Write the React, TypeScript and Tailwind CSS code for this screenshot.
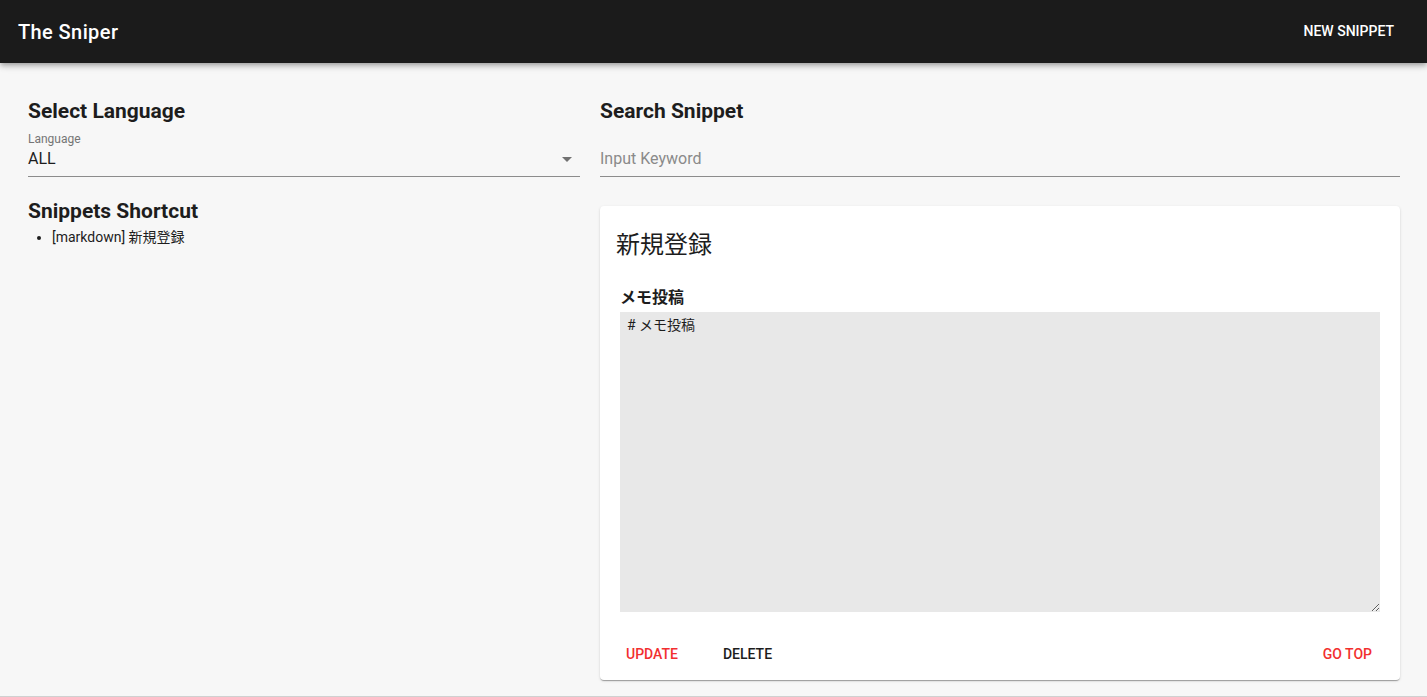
import React, { ReactElement } from 'react';

const FONT = "font-['Roboto','Noto_Sans_CJK_JP',sans-serif]";

const Header = (): ReactElement => {
  return (
    <header className="h-[63px] bg-[#1b1b1b] flex items-center justify-between pl-[18px] pr-[25px] shadow-[0_2px_4px_-1px_rgba(0,0,0,0.2),0_4px_5px_0_rgba(0,0,0,0.14),0_1px_10px_0_rgba(0,0,0,0.12)] relative z-10">
      <h1 className="text-white text-[20px] font-medium tracking-[0.02em]">The Sniper</h1>
      <button className="text-white text-[14px] font-medium uppercase tracking-[0em] px-2 h-9">New Snippet</button>
    </header>
  );
};

const LeftPanel = (): ReactElement => {
  return (
    <div className="w-[552px] shrink-0">
      <h2 className="text-[21px] leading-8 font-bold text-[#1d1d1d]">Select Language</h2>
      <div className="mt-1">
        <div className="text-[12px] leading-4 text-[#757575]">Language</div>
        <div className="flex items-center justify-between border-b border-[#8c8c8c] pb-[5px]">
          <span className="text-[16px] leading-6 text-[#1d1d1d]">ALL</span>
          <svg width="24" height="24" viewBox="0 0 24 24" className="mr-[1px]">
            <path d="M7 10l5 5 5-5z" fill="rgba(0,0,0,0.54)" />
          </svg>
        </div>
      </div>
      <h2 className="mt-[18px] text-[21px] leading-8 font-bold text-[#1d1d1d]">Snippets Shortcut</h2>
      <ul className="list-disc pl-6 text-[14px] leading-5 text-[#1d1d1d]">
        <li>[markdown] 新規登録</li>
      </ul>
    </div>
  );
};

const SnippetCard = (): ReactElement => {
  return (
    <div className="mt-[29px] bg-white rounded-[4px] shadow-[0_2px_1px_-1px_rgba(0,0,0,0.2),0_1px_1px_0_rgba(0,0,0,0.14),0_1px_3px_0_rgba(0,0,0,0.12)]">
      <div className="px-4 pt-[23px]">
        <h3 className="text-[24px] leading-8 text-[#1d1d1d]">新規登録</h3>
      </div>
      <div className="px-5">
        <div className="mt-[25px] text-[16px] leading-6 font-bold text-[#1d1d1d]">メモ投稿</div>
        <textarea
          className="mt-[2px] block w-full h-[300px] bg-[#e8e8e8] text-[14px] leading-5 text-[#1d1d1d] px-[7px] py-[3px] outline-none"
          defaultValue="# メモ投稿"
        />
      </div>
      <div className="mt-4 px-2 pt-2 pb-2 flex items-center pr-[10px]">
        <button className="h-9 px-[18px] text-[14px] font-medium uppercase tracking-[0em] text-[#f22f2f]">Update</button>
        <button className="ml-[9px] h-9 px-[18px] text-[14px] font-medium uppercase tracking-[0em] text-[#1d1d1d]">Delete</button>
        <button className="ml-auto h-9 px-[18px] text-[14px] font-medium uppercase tracking-[0em] text-[#f22f2f]">Go Top</button>
      </div>
    </div>
  );
};

const RightPanel = (): ReactElement => {
  return (
    <div className="flex-1 min-w-0">
      <h2 className="text-[21px] leading-8 font-bold text-[#1d1d1d]">Search Snippet</h2>
      <div className="mt-5 border-b border-[#8c8c8c] pb-[5px]">
        <input
          className="w-full text-[16px] leading-6 bg-transparent outline-none placeholder:text-[#8a8a8a] text-[#1d1d1d]"
          placeholder="Input Keyword"
        />
      </div>
      <SnippetCard />
    </div>
  );
};

export default function App(): ReactElement {
  return (
    <div className={`${FONT} h-[697px] overflow-hidden bg-[#f7f7f7] border-b border-[#d0d0d0]`}>
      <Header />
      <main className="flex gap-5 pl-7 pr-[27px] pt-[32px]">
        <LeftPanel />
        <RightPanel />
      </main>
    </div>
  );
}
